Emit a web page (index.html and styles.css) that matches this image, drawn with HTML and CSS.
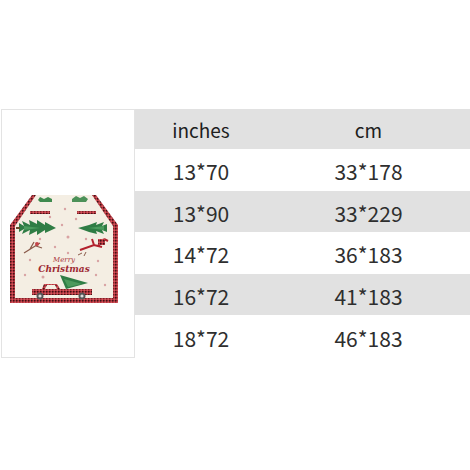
FILE: index.html
```html
<!DOCTYPE html>
<html>
<head>
<meta charset="utf-8">
<link rel="stylesheet" href="styles.css">
</head>
<body>
<div class="page">
  <div class="photo">
    <svg class="runner" width="108" height="108" viewBox="0 0 108 108">
      <defs>
        <pattern id="check" width="3" height="3" patternUnits="userSpaceOnUse">
          <rect width="3" height="3" fill="#b8303a"/>
          <rect width="1.5" height="1.5" fill="#3a1518"/>
          <rect x="1.5" y="1.5" width="1.5" height="1.5" fill="#cf5a60"/>
        </pattern>
      </defs>
      <polygon points="22,0 86,0 108,30 108,108 0,108 0,30" fill="url(#check)"/>
      <polygon points="26,0 82,0 103,31 103,103 5,103 5,31" fill="#f4eee3"/>
      <!-- top small trees and stripes -->
      <polygon points="28,5 30,2 34,4 38,2 42,4 42,7 30,7" fill="#3f8a4e"/>
      <polygon points="62,4 66,1 70,3 74,1 78,4 76,7 62,7" fill="#4c9158"/>
      <rect x="20" y="16" width="20" height="3" fill="url(#check)"/>
      <rect x="67" y="16" width="19" height="3" fill="url(#check)"/>
      <!-- sideways trees -->
      <polygon points="9,28 14,31 12,26 20,30 19,25 27,29 27,25 35,30 35,27 46,33 35,38 35,35 27,40 27,36 19,40 20,35 12,39 14,34 9,37" fill="#2f7d45"/>
      <polygon points="14,31 30,33 14,35" fill="#4b9c5e"/>
      <rect x="6" y="32" width="4" height="2" fill="#6b4b2e"/>
      <polygon points="97,29 92,31 94,27 86,30 87,27 79,30 68,33 79,37 87,39 86,36 94,39 92,35 97,37" fill="#2f7d45"/>
      <polygon points="94,31 78,33 94,35" fill="#4b9c5e"/>
      <!-- branch / bird left -->
      <path d="M14,58 L30,48 M20,54 L24,47 M26,51 L32,53" stroke="#8a5a4a" stroke-width="1.3" fill="none"/>
      <circle cx="27" cy="49" r="2" fill="#c4454b"/>
      <!-- deer right -->
      <path d="M70,55 L84,50 L92,52 M84,50 L82,44 M88,51 L94,44 M94,44 L98,46" stroke="#b3222e" stroke-width="2" fill="none"/>
      <rect x="88" y="44" width="7" height="6" fill="url(#check)"/>
      <path d="M72,58 L68,60 M76,57 L74,61" stroke="#8a5a4a" stroke-width="1" fill="none"/>
      <!-- snowflakes -->
      <g fill="#d9a3a3">
        <circle cx="40" cy="22" r="1.2"/><circle cx="55" cy="14" r="1.2"/><circle cx="66" cy="24" r="1.2"/>
        <circle cx="52" cy="30" r="1.2"/><circle cx="30" cy="44" r="1.2"/><circle cx="58" cy="42" r="1.5"/>
        <circle cx="45" cy="52" r="1.2"/><circle cx="20" cy="65" r="1.2"/><circle cx="88" cy="66" r="1.2"/>
        <circle cx="33" cy="82" r="1.5"/><circle cx="86" cy="80" r="1.2"/><circle cx="15" cy="80" r="1.2"/>
        <circle cx="95" cy="90" r="1.2"/><circle cx="58" cy="58" r="1.2"/><circle cx="76" cy="44" r="1.2"/>
      </g>
      <!-- text -->
      <text x="54" y="67" text-anchor="middle" font-family="'DejaVu Serif', serif" font-style="italic" font-size="7" fill="#a8323a">Merry</text>
      <text x="54" y="77" text-anchor="middle" font-family="'DejaVu Serif', serif" font-style="italic" font-weight="bold" font-size="9" fill="#9e2a33">Christmas</text>
      <!-- tree on truck -->
      <polygon points="50,80 78,88 56,94" fill="#2f7d45"/>
      <polygon points="54,84 72,89 58,92" fill="#4c9a5c"/>
      <!-- truck -->
      <path d="M34,89 L47,89 L50,94 L82,94 L82,100 L22,100 L22,94 L32,94 Z" fill="url(#check)"/>
      <polygon points="37,90 45,90 47,94 35,94" fill="#f4eee3"/>
      <circle cx="30" cy="101" r="3.5" fill="#555"/>
      <circle cx="30" cy="101" r="1.6" fill="#ddd"/>
      <circle cx="72" cy="101" r="3.5" fill="#555"/>
      <circle cx="72" cy="101" r="1.6" fill="#ddd"/>
    </svg>
  </div>
  <div class="table">
    <div class="row head"><div class="c1">inches</div><div class="c2">cm</div></div>
    <div class="row tall"><div class="c1">13*70</div><div class="c2">33*178</div></div>
    <div class="row gray"><div class="c1">13*90</div><div class="c2">33*229</div></div>
    <div class="row tall"><div class="c1">14*72</div><div class="c2">36*183</div></div>
    <div class="row gray"><div class="c1">16*72</div><div class="c2">41*183</div></div>
    <div class="row tall"><div class="c1">18*72</div><div class="c2">46*183</div></div>
  </div>
</div>
</body>
</html>
```
FILE: styles.css
```css
html, body {
  margin: 0;
  padding: 0;
  background: #ffffff;
}
body {
  width: 470px;
  height: 470px;
  overflow: hidden;
  font-family: "Noto Sans CJK SC", "Noto Sans", sans-serif;
  color: #2e2e2e;
}
.page {
  display: flex;
  padding-top: 109px;
  padding-left: 1px;
}
.photo {
  box-sizing: border-box;
  width: 134px;
  height: 249px;
  border: 1px solid #e3e3e3;
  display: flex;
  justify-content: center;
  align-items: flex-start;
  padding-top: 85px;
  padding-right: 8px;
}
.runner {
  display: block;
}
.table {
  flex: 1;
  display: flex;
  flex-direction: column;
}
.row {
  display: flex;
  align-items: center;
  height: 41.6px;
  font-size: 21px;
}
.row.head {
  height: 40px;
  background: #e1e1e1;
  font-size: 19px;
  color: #1e1e1e;
}
.row.gray {
  background: #e1e1e1;
}
.c1 {
  width: 132px;
  text-align: center;
  padding-top: 3px;
}
.c2 {
  flex: 1;
  text-align: center;
  padding-top: 3px;
}
.head .c1, .head .c2 {
  padding-top: 0;
}
```
